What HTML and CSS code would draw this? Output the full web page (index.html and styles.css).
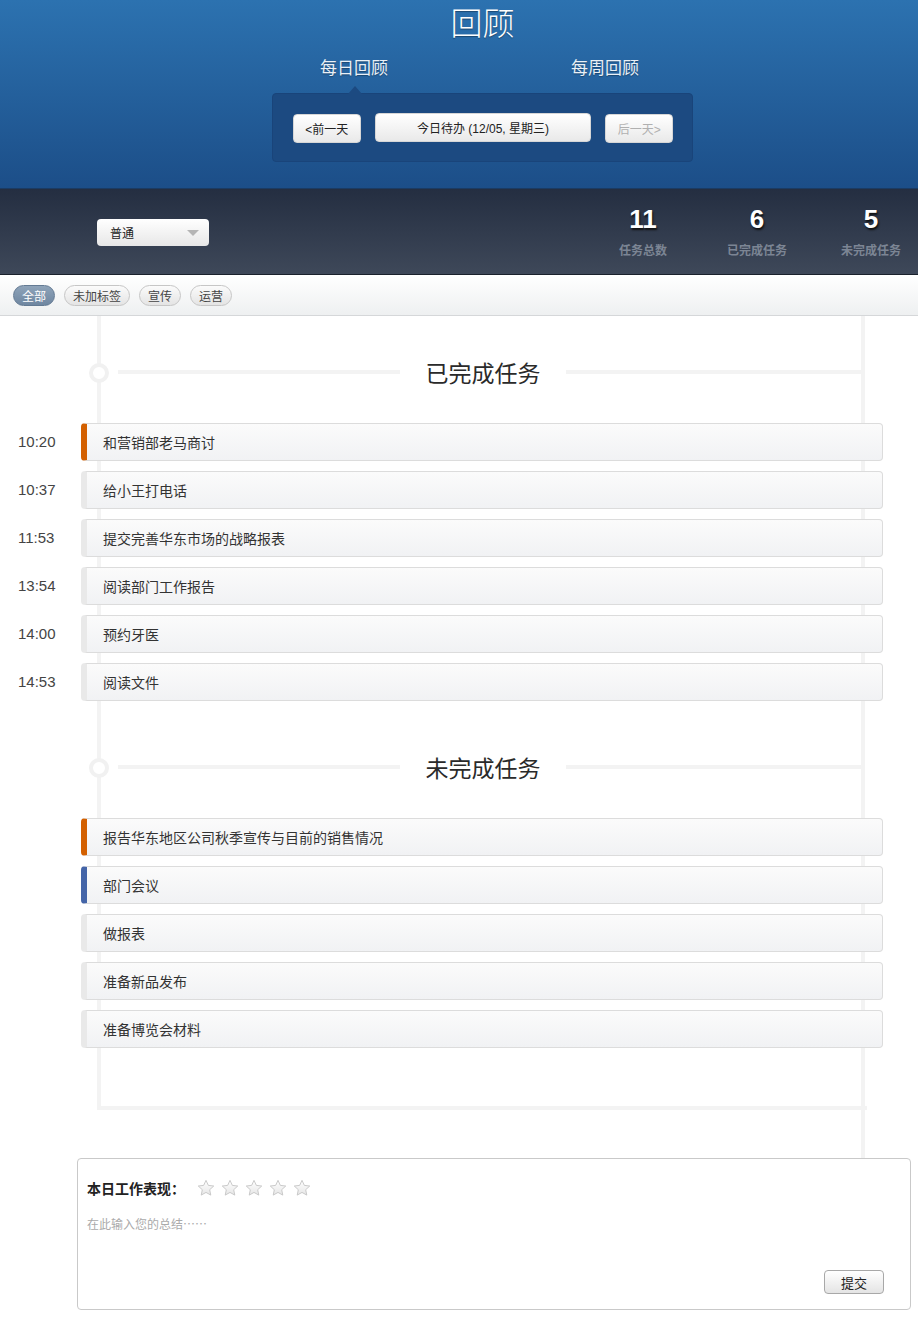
FILE: index.html
```html
<!DOCTYPE html>
<html lang="zh">
<head>
<meta charset="utf-8">
<title>回顾</title>
<link rel="stylesheet" href="styles.css">
</head>
<body>
<header class="hero">
  <div class="hero-inner">
    <h1 class="hero-title">回顾</h1>
    <nav class="tabs">
      <span class="tab tab-active">每日回顾</span>
      <span class="tab tab-week">每周回顾</span>
    </nav>
    <div class="day-panel">
      <button class="btn btn-nav">&lt;前一天</button>
      <button class="btn btn-today">今日待办 (12/05, 星期三)</button>
      <button class="btn btn-nav btn-disabled">后一天&gt;</button>
    </div>
  </div>
</header>

<section class="statbar">
  <div class="select">
    <span class="select-text">普通</span>
    <span class="select-arrow"></span>
  </div>
  <div class="stats">
    <div class="stat"><div class="stat-num">11</div><div class="stat-label">任务总数</div></div>
    <div class="stat"><div class="stat-num">6</div><div class="stat-label">已完成任务</div></div>
    <div class="stat"><div class="stat-num">5</div><div class="stat-label">未完成任务</div></div>
  </div>
</section>

<section class="filters">
  <span class="pill pill-active">全部</span>
  <span class="pill">未加标签</span>
  <span class="pill">宣传</span>
  <span class="pill">运营</span>
</section>

<main class="board">
  <div class="track">
    <div class="sec-head sec-first">
      <span class="node"></span>
      <span class="hline"></span>
      <h2 class="sec-title">已完成任务</h2>
      <span class="hline"></span>
    </div>
    <ul class="tasks">
      <li class="task"><span class="time">10:20</span><div class="task-box tag-orange">和营销部老马商讨</div></li>
      <li class="task"><span class="time">10:37</span><div class="task-box">给小王打电话</div></li>
      <li class="task"><span class="time">11:53</span><div class="task-box">提交完善华东市场的战略报表</div></li>
      <li class="task"><span class="time">13:54</span><div class="task-box">阅读部门工作报告</div></li>
      <li class="task"><span class="time">14:00</span><div class="task-box">预约牙医</div></li>
      <li class="task"><span class="time">14:53</span><div class="task-box">阅读文件</div></li>
    </ul>
    <div class="sec-head sec-second">
      <span class="node"></span>
      <span class="hline"></span>
      <h2 class="sec-title">未完成任务</h2>
      <span class="hline"></span>
    </div>
    <ul class="tasks">
      <li class="task"><span class="time"></span><div class="task-box tag-orange">报告华东地区公司秋季宣传与目前的销售情况</div></li>
      <li class="task"><span class="time"></span><div class="task-box tag-blue">部门会议</div></li>
      <li class="task"><span class="time"></span><div class="task-box">做报表</div></li>
      <li class="task"><span class="time"></span><div class="task-box">准备新品发布</div></li>
      <li class="task"><span class="time"></span><div class="task-box">准备博览会材料</div></li>
    </ul>
  </div>
  <div class="board-gap"></div>
</main>

<section class="summary">
  <div class="rating">
    <span class="rating-label">本日工作表现：</span>
    <span class="stars">
      <svg class="star" viewBox="0 0 20 20"><defs><linearGradient id="sg" x1="0" y1="0" x2="0" y2="1"><stop offset="0" stop-color="#ffffff"/><stop offset="1" stop-color="#e6e6e6"/></linearGradient></defs><path d="M10 1.5l2.6 5.6 6 .7-4.5 4.1 1.2 6-5.3-3-5.3 3 1.2-6L1.4 7.8l6-.7z" fill="url(#sg)" stroke="#c4c4c4" stroke-width="1" stroke-linejoin="round"/></svg>
      <svg class="star" viewBox="0 0 20 20"><path d="M10 1.5l2.6 5.6 6 .7-4.5 4.1 1.2 6-5.3-3-5.3 3 1.2-6L1.4 7.8l6-.7z" fill="url(#sg)" stroke="#c4c4c4" stroke-width="1" stroke-linejoin="round"/></svg>
      <svg class="star" viewBox="0 0 20 20"><path d="M10 1.5l2.6 5.6 6 .7-4.5 4.1 1.2 6-5.3-3-5.3 3 1.2-6L1.4 7.8l6-.7z" fill="url(#sg)" stroke="#c4c4c4" stroke-width="1" stroke-linejoin="round"/></svg>
      <svg class="star" viewBox="0 0 20 20"><path d="M10 1.5l2.6 5.6 6 .7-4.5 4.1 1.2 6-5.3-3-5.3 3 1.2-6L1.4 7.8l6-.7z" fill="url(#sg)" stroke="#c4c4c4" stroke-width="1" stroke-linejoin="round"/></svg>
      <svg class="star" viewBox="0 0 20 20"><path d="M10 1.5l2.6 5.6 6 .7-4.5 4.1 1.2 6-5.3-3-5.3 3 1.2-6L1.4 7.8l6-.7z" fill="url(#sg)" stroke="#c4c4c4" stroke-width="1" stroke-linejoin="round"/></svg>
    </span>
  </div>
  <div class="placeholder">在此输入您的总结……</div>
  <div class="summary-foot">
    <button class="btn btn-submit">提交</button>
  </div>
</section>
</body>
</html>
```

FILE: styles.css
```css
* { box-sizing: border-box; }
html, body { margin: 0; padding: 0; }
body {
  width: 918px;
  overflow-x: hidden;
  background: #ffffff;
  font-family: "Liberation Sans", "Noto Sans CJK SC", sans-serif;
  color: #333;
}
ul { list-style: none; margin: 0; padding: 0; }
h1, h2 { margin: 0; font-weight: normal; }

/* Header */
.hero {
  height: 188px;
  background: linear-gradient(#2c72b0, #1c4e88);
}
.hero-inner {
  width: 421px;
  margin-left: 272px;
}
.hero-title {
  padding-top: 3px;
  height: 40px;
  font-family: "Noto Sans CJK SC", sans-serif;
  font-weight: 300;
  font-size: 32px;
  line-height: 36px;
  color: #fff;
  text-align: center;
  text-shadow: 0 1px 1px rgba(0,0,0,0.35);
}
.tabs {
  display: flex;
  margin-top: 15px;
  height: 24px;
}
.tab {
  width: 164px;
  text-align: center;
  font-family: "Noto Sans CJK SC", sans-serif;
  font-size: 17px;
  line-height: 24px;
  color: #e9f0f7;
  text-shadow: 0 1px 1px rgba(0,0,0,0.3);
}
.tab-week { margin-left: 87px; }
.day-panel {
  position: relative;
  margin-top: 14px;
  height: 69px;
  display: flex;
  align-items: flex-start;
  padding: 20px 19px 0 20px;
  gap: 14px;
  background: #1c4a81;
  border: 1px solid #19447a;
  border-radius: 4px;
}
.day-panel::before {
  content: "";
  position: absolute;
  left: 75px;
  top: -8px;
  border-left: 7px solid transparent;
  border-right: 7px solid transparent;
  border-bottom: 8px solid #1c4a81;
}
.btn {
  font-family: "Liberation Sans", "Noto Sans CJK SC", sans-serif;
  font-size: 12px;
  color: #222;
  height: 29px;
  padding: 0;
  border: 1px solid #d6d6d6;
  border-radius: 4px;
  background: linear-gradient(#ffffff, #e9e9e9);
}
.btn-nav { width: 68px; }
.btn-today { width: 218px; margin-top: -1px; }
.btn-disabled { color: #b0b0b0; }

/* Stat bar */
.statbar {
  height: 87px;
  display: flex;
  align-items: center;
  overflow: hidden;
  background: linear-gradient(#242e41, #3e4859);
  border-top: 1px solid #1b3b63;
  border-bottom: 1px solid #1a212c;
}
.select {
  margin-left: 97px;
  width: 112px;
  height: 27px;
  display: flex;
  align-items: center;
  justify-content: space-between;
  padding: 0 10px 0 13px;
  border-radius: 4px;
  background: linear-gradient(#ffffff, #e7e7e7);
  margin-top: 2px;
}
.select-text {
  font-family: "Noto Sans CJK SC", sans-serif;
  font-size: 12px;
  color: #222;
}
.select-arrow {
  width: 0; height: 0;
  border-left: 6px solid transparent;
  border-right: 6px solid transparent;
  border-top: 6px solid #b5b5b5;
}
.stats {
  display: flex;
  margin-left: auto;
  margin-right: -10px;
  align-self: flex-start;
  padding-top: 15px;
}
.stat {
  width: 114px;
  text-align: center;
}
.stat-num {
  font-size: 26px;
  font-weight: bold;
  line-height: 30px;
  color: #fff;
  text-shadow: 1px 2px 2px #111;
}
.stat-label {
  margin-top: 8px;
  font-family: "Noto Sans CJK SC", sans-serif;
  font-size: 12px;
  font-weight: bold;
  line-height: 16px;
  color: #7c8594;
}

/* Filters */
.filters {
  height: 41px;
  display: flex;
  align-items: center;
  gap: 9px;
  padding-left: 13px;
  background: linear-gradient(#ffffff, #eef0f1);
  border-bottom: 1px solid #d5d7d9;
}
.pill {
  height: 21px;
  padding: 0 8px;
  border: 1px solid #c6c6c6;
  border-radius: 11px;
  background: linear-gradient(#fbfbfb, #e4e4e4);
  font-family: "Noto Sans CJK SC", sans-serif;
  font-size: 12px;
  line-height: 19px;
  color: #444;
}
.pill-active {
  background: linear-gradient(#8ea3b9, #6f87a1);
  border-color: #637a93;
  color: #fff;
}

/* Board / timeline */
.board {
  position: relative;
}
.board::after {
  content: "";
  position: absolute;
  left: 861px;
  top: 0;
  bottom: 0;
  width: 4px;
  background: #f3f3f3;
}
.track {
  position: relative;
  padding-top: 1px;
  padding-bottom: 62px;
}
.track::before {
  content: "";
  position: absolute;
  left: 97px;
  top: 0;
  bottom: 0;
  width: 766px;
  border-left: 4px solid #f3f3f3;
  border-bottom: 4px solid #f3f3f3;
}
.board-gap { height: 48px; }

.sec-head {
  position: relative;
  z-index: 1;
  height: 40px;
  display: grid;
  grid-template-columns: 282px 166px 295px;
  align-items: center;
  padding-left: 118px;
}
.sec-first { margin-top: 35px; }
.sec-second { margin-top: 46px; }
.hline {
  height: 4px;
  background: #f3f3f3;
}
.sec-title {
  text-align: center;
  font-family: "Noto Sans CJK SC", serif;
  font-size: 23px;
  line-height: 40px;
  color: #2a2a2a;
}
.node {
  position: absolute;
  left: 89px;
  top: 11px;
  width: 20px;
  height: 20px;
  border: 4px solid #f1f1f1;
  border-radius: 50%;
  background: #fff;
}
.tasks {
  margin-top: 31px;
  display: flex;
  flex-direction: column;
  gap: 10px;
}
.task {
  position: relative;
  z-index: 1;
  display: grid;
  grid-template-columns: 81px 802px;
  height: 38px;
}
.time {
  padding-left: 18px;
  font-size: 15px;
  line-height: 38px;
  color: #444;
}
.task-box {
  height: 38px;
  padding-left: 16px;
  border: 1px solid #dcdcdc;
  border-left: 6px solid #e9e9e9;
  border-radius: 4px;
  background: linear-gradient(#fbfbfb, #f1f2f4);
  font-family: "Noto Sans CJK SC", sans-serif;
  font-size: 14px;
  line-height: 36px;
  color: #333;
}
.tag-orange { border-left-color: #d36000; }
.tag-blue { border-left-color: #4465a8; }

/* Summary */
.summary {
  margin-left: 77px;
  width: 834px;
  height: 152px;
  border: 1px solid #c9c9c9;
  border-radius: 4px;
  padding: 17px 0 0 9px;
  display: flex;
  flex-direction: column;
}
.rating {
  display: flex;
  align-items: center;
  height: 24px;
}
.rating-label {
  font-family: "Noto Sans CJK SC", sans-serif;
  font-size: 14px;
  font-weight: bold;
  color: #222;
}
.stars {
  display: flex;
  gap: 6px;
  margin-left: 12px;
}
.star {
  width: 18px;
  height: 18px;
  display: block;
}
.placeholder {
  margin-top: 16px;
  font-family: "Noto Sans CJK SC", sans-serif;
  font-size: 12px;
  line-height: 16px;
  color: #aaa;
}
.summary-foot {
  margin-top: auto;
  display: flex;
  justify-content: flex-end;
  padding: 0 26px 15px 0;
}
.btn-submit {
  width: 60px;
  height: 24px;
  font-size: 13px;
  border: 1px solid #a8a8a8;
  background: linear-gradient(#ffffff, #e4e4e4);
  font-family: "Noto Sans CJK SC", sans-serif;
}
```
